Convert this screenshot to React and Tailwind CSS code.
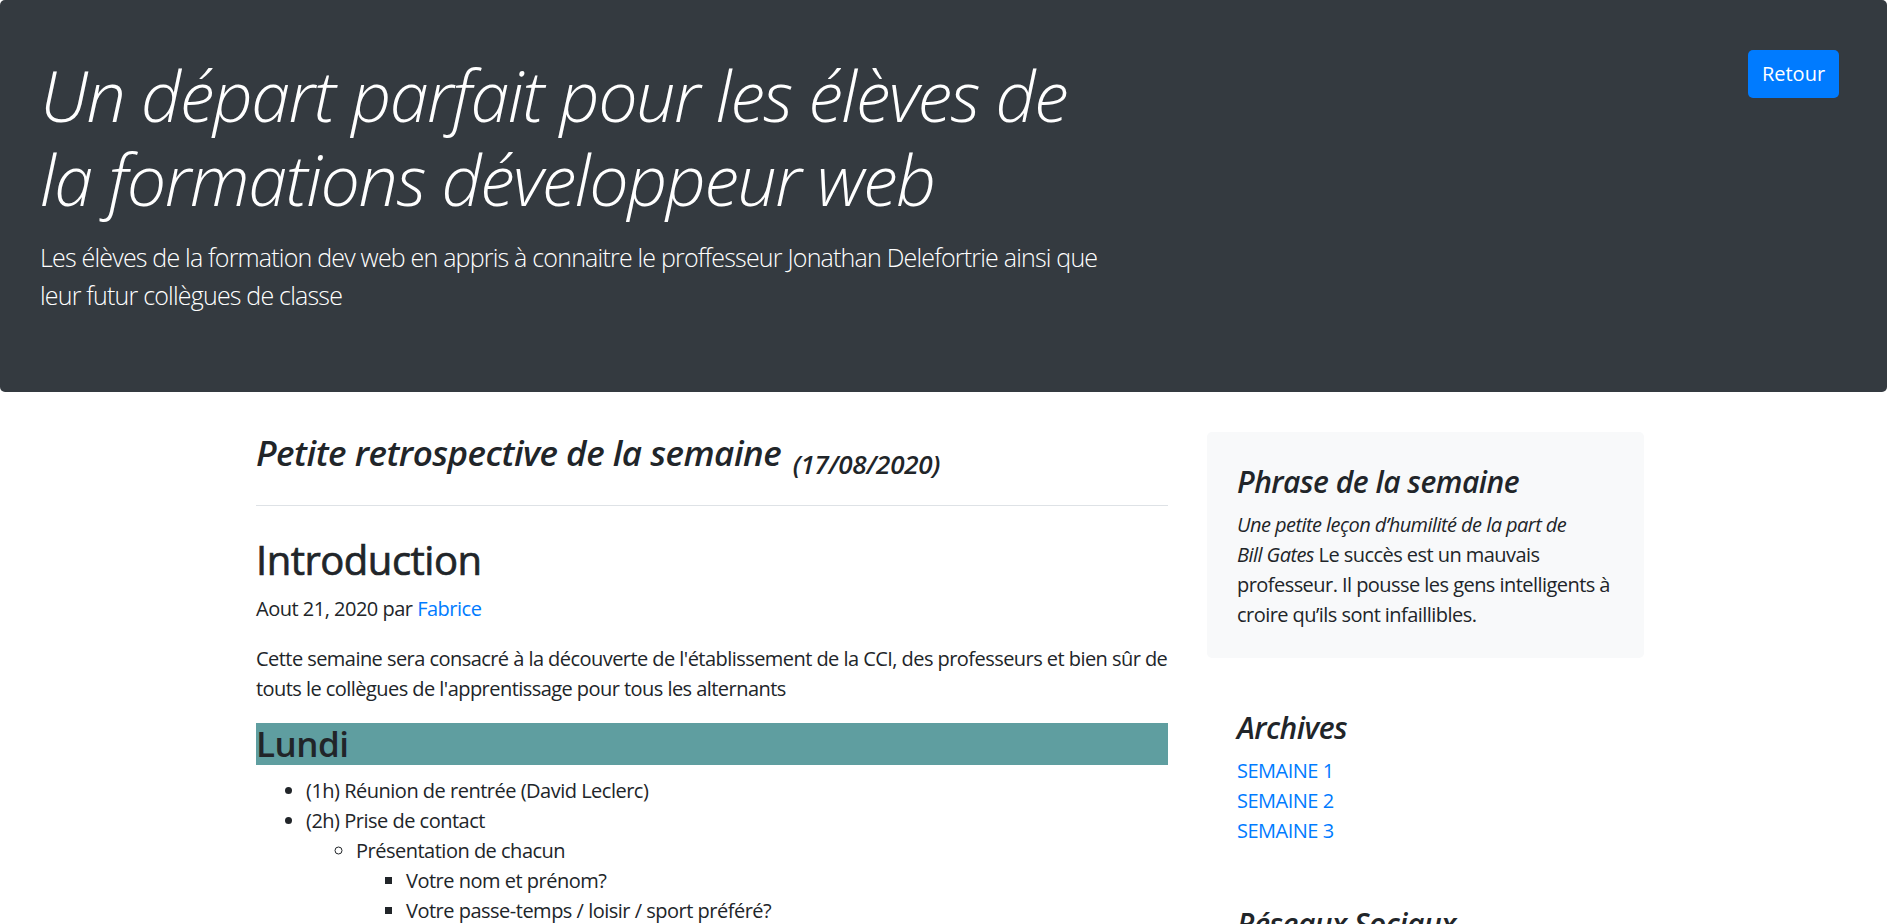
export default function App() {
  return (
    <div className="min-h-screen bg-white text-[#212529] font-['Open_Sans',sans-serif] tracking-[-0.5px]">
      <header className="bg-[#343a40] rounded-[5px] mb-[40px] pl-[40px] pr-[48px] pt-[50px] pb-[78px] flex justify-between items-start text-white">
        <div className="whitespace-nowrap">
          <h1 className="mt-[3px] text-[70px] leading-[84px] font-light italic tracking-[-1.5px]">
            Un départ parfait pour les élèves de
            <br />
            la formations développeur web
          </h1>
          <p className="mt-[18px] text-[25px] leading-[37.5px] font-light tracking-[-0.8px]">
            Les élèves de la formation dev web en appris à connaitre le proffesseur Jonathan Delefortrie ainsi que
            <br />
            leur futur collègues de classe
          </p>
        </div>
        <button className="w-[91px] h-[48px] bg-[#007bff] rounded-[5px] text-[20px] text-white tracking-normal">Retour</button>
      </header>

      <main className="ml-[256px] flex items-start gap-[39px]">
        <div className="w-[912px] shrink-0">
          <h3 className="italic font-semibold text-[35px] leading-[42px] pb-[31px] mb-[30px] border-b border-[#dee2e6] whitespace-nowrap">
            Petite retrospective de la semaine{" "}
            <small className="relative top-[8px] ml-[3px] text-[26px] leading-none tracking-[-0.3px]">(17/08/2020)</small>
          </h3>
          <h2 className="mt-[1px] text-[40px] leading-[48px] font-normal [-webkit-text-stroke:0.7px_currentcolor] mb-[10px]">
            Introduction
          </h2>
          <p className="text-[20px] leading-[30px] mb-[20px]">
            Aout 21, 2020 par <a href="#" className="text-[#007bff]">Fabrice</a>
          </p>
          <p className="text-[20px] leading-[30px] mb-[19px] whitespace-nowrap tracking-[-0.55px]">
            Cette semaine sera consacré à la découverte de l'établissement de la CCI, des professeurs et bien sûr de
            <br />
            touts le collègues de l'apprentissage pour tous les alternants
          </p>
          <h3 className="bg-[#5f9ea0] text-[35px] leading-[42px] font-semibold mb-[11px]">Lundi</h3>
          <ul className="list-disc pl-[50px] text-[20px] leading-[30px]">
            <li>(1h) Réunion de rentrée (David Leclerc)</li>
            <li>
              (2h) Prise de contact
              <ul className="list-[circle] pl-[50px]">
                <li>
                  Présentation de chacun
                  <ul className="list-[square] pl-[50px]">
                    <li>Votre nom et prénom?</li>
                    <li>Votre passe-temps / loisir / sport préféré?</li>
                  </ul>
                </li>
              </ul>
            </li>
          </ul>
        </div>

        <aside className="w-[437px] shrink-0">
          <div className="pt-[32px] pb-[28px] px-[30px] mb-[20px] bg-[#f8f9fa] rounded-[5px]">
            <h4 className="italic font-semibold text-[30px] leading-[36px] mb-[10px]">Phrase de la semaine</h4>
            <p className="text-[20px] leading-[30px] whitespace-nowrap tracking-[-0.55px]">
              <em>
                Une petite leçon d’humilité de la part de
                <br />
                Bill Gates
              </em>{" "}
              Le succès est un mauvais
              <br />
              professeur. Il pousse les gens intelligents à
              <br />
              croire qu’ils sont infaillibles.
            </p>
          </div>
          <div className="pt-[32px] pb-[28px] px-[30px]">
            <h4 className="italic font-semibold text-[30px] leading-[36px] mb-[10px]">Archives</h4>
            <ol className="text-[20px] leading-[30px]">
              <li><a href="#" className="text-[#007bff]">SEMAINE 1</a></li>
              <li><a href="#" className="text-[#007bff]">SEMAINE 2</a></li>
              <li><a href="#" className="text-[#007bff]">SEMAINE 3</a></li>
            </ol>
          </div>
          <div className="pt-[32px] pb-[28px] px-[30px]">
            <h4 className="italic font-semibold text-[30px] leading-[36px] mb-[10px]">Réseaux Sociaux</h4>
            <ol className="text-[20px] leading-[30px]">
              <li><a href="#" className="text-[#007bff]">GitHub</a></li>
              <li><a href="#" className="text-[#007bff]">Twitter</a></li>
              <li><a href="#" className="text-[#007bff]">Facebook</a></li>
            </ol>
          </div>
        </aside>
      </main>
    </div>
  );
}
